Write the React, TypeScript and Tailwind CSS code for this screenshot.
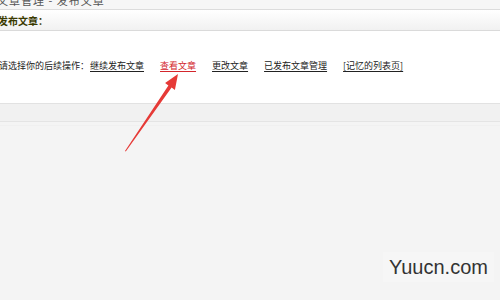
import React from "react";

const cjk = { fontFamily: '"SimSun","Noto Sans CJK SC","Liberation Sans",sans-serif' };

export default function App() {
  const links = [
    { t: "继续发布文章", red: false },
    { t: "查看文章", red: true },
    { t: "更改文章", red: false },
    { t: "已发布文章管理", red: false },
    { t: "[记忆的列表页]", red: false },
  ];
  return (
    <div className="relative w-[500px] h-[300px] overflow-hidden bg-[#f4f4f4]" style={cjk}>
      {/* top strip */}
      <div className="h-[10px] overflow-hidden bg-[#f6f6f6] border-b border-[#dcdcdc] flex items-end">
        <div className="text-[11px] leading-[11px] text-[#555] ml-[-3px] mb-[3px] tracking-[1px]">文章管理 - 发布文章</div>
      </div>
      {/* header bar */}
      <div className="h-[21px] bg-gradient-to-b from-white to-[#f1f1f1] border-b border-[#dadada] flex items-center">
        <span className="text-[10px] font-bold text-[#3a3a00] ml-[-2px]">发布文章：</span>
      </div>
      {/* content */}
      <div className="h-[72px] bg-white flex items-center pb-[2px]">
        <span className="text-[9px] text-[#222] ml-[-1px] w-[91px] shrink-0">请选择你的后续操作：</span>
        <div className="flex items-center gap-[16px]">
          {links.map((l) => (
            <a
              key={l.t}
              className={`text-[9px] underline underline-offset-[2px] ${l.red ? "text-[#d3262c]" : "text-[#222]"}`}
            >
              {l.t}
            </a>
          ))}
        </div>
      </div>
      {/* gray band */}
      <div className="h-[19px] bg-[#f1f1f1] border-t border-[#e2e2e2] border-b border-b-[#e4e4e4]" />
      <div className="h-[4px] border-b border-[#f0f0f0]" />

      {/* arrow */}
      <svg className="absolute left-0 top-0" width="500" height="300" viewBox="0 0 500 300">
        <polygon
          points="125,151 168.4,85.4 165.1,83.1 178,74 174.9,89.9 171.6,87.6 125.8,151.6"
          fill="#e63a37"
        />
      </svg>

      {/* watermark */}
      <div className="absolute left-[383px] top-[252px] px-[6px] py-[2px] bg-[#f7f7f7]/60">
        <span className="text-[20px] text-[#333] leading-[26px]" style={{ fontFamily: '"Liberation Sans",Arial,sans-serif' }}>
          Yuucn.com
        </span>
      </div>
    </div>
  );
}
